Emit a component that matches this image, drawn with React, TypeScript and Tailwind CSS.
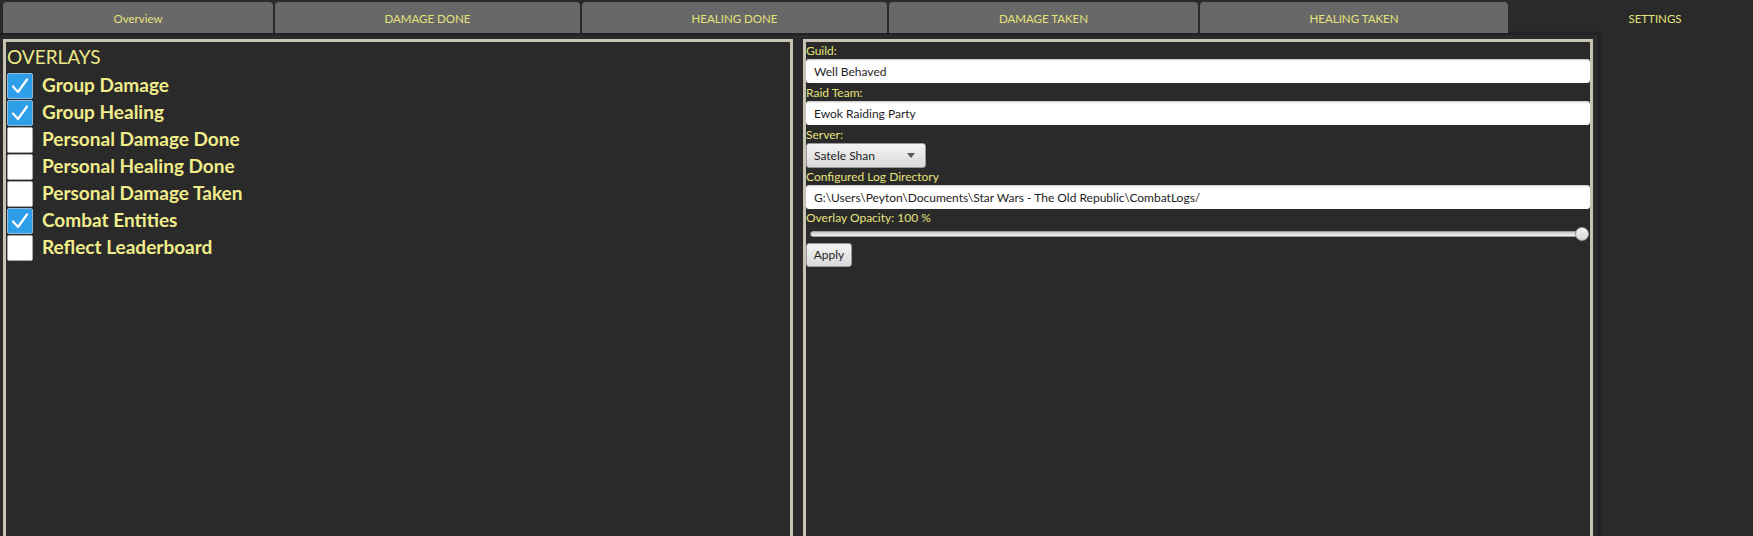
import { useState } from 'react';

type Overlay = { label: string; checked: boolean };

const tabs = [
  { label: 'Overview', w: 'w-[270px]' },
  { label: 'DAMAGE DONE', w: 'w-[305px]' },
  { label: 'HEALING DONE', w: 'w-[305px]' },
  { label: 'DAMAGE TAKEN', w: 'w-[309px]' },
  { label: 'HEALING TAKEN', w: 'w-[308px]' },
];

const initialOverlays: Overlay[] = [
  { label: 'Group Damage', checked: true },
  { label: 'Group Healing', checked: true },
  { label: 'Personal Damage Done', checked: false },
  { label: 'Personal Healing Done', checked: false },
  { label: 'Personal Damage Taken', checked: false },
  { label: 'Combat Entities', checked: true },
  { label: 'Reflect Leaderboard', checked: false },
];

function CheckBox({ checked }: { checked: boolean }) {
  return (
    <div
      className={
        checked
          ? 'flex h-[26px] w-[26px] shrink-0 items-center justify-center rounded-[2px] border border-[#8fb8d8] bg-[#2f9fea]'
          : 'h-[26px] w-[26px] shrink-0 rounded-[2px] border border-[#a8a8a8] bg-white'
      }
    >
      {checked && (
        <svg width="22" height="22" viewBox="0 0 22 22">
          <polyline
            points="4,11.5 9,17 18,4.5"
            fill="none"
            stroke="white"
            strokeWidth="2.2"
            strokeLinecap="round"
            strokeLinejoin="round"
          />
        </svg>
      )}
    </div>
  );
}

function Label({ children }: { children: string }) {
  return <div className="h-[17px] text-[12px] leading-[17px] text-[#e6e27c]">{children}</div>;
}

function Field({ value }: { value: string }) {
  return (
    <div className="flex h-[24px] items-center rounded-[3px] border-t border-[#d0d0d0] bg-white pl-[8px] text-[12px] text-[#1e1e1e] shadow-[inset_0_1px_1px_rgba(0,0,0,0.08)]">
      {value}
    </div>
  );
}

export default function App() {
  const [overlays] = useState(initialOverlays);

  return (
    <div className="h-[536px] w-full overflow-hidden bg-[#2a2a2a] font-['Lato','Liberation_Sans',sans-serif]">
      {/* tab header */}
      <div className="flex h-[33px] gap-[2px] overflow-hidden pl-[3px] pt-[2px]">
        {tabs.map((t) => (
          <div
            key={t.label}
            className={`${t.w} flex shrink-0 items-center justify-center rounded-t-[4px] bg-[#686868] pt-[3px] text-[11.5px] text-[#e6e27a]`}
          >
            {t.label}
          </div>
        ))}
        <div className="flex w-[290px] shrink-0 items-center justify-center pt-[3px] text-[11.5px] text-[#e6e27a]">
          SETTINGS
        </div>
      </div>

      {/* content */}
      <div className="flex h-[503px] w-[1598px] gap-[10px] border-t-2 border-[#212121] pl-[3px] pt-[4px] shadow-[2px_0_3px_rgba(0,0,0,0.35)]">
        {/* overlays panel */}
        <div className="h-[520px] w-[790px] shrink-0 border-[3px] border-[#c9c3b3]">
          <div className="flex h-[30px] items-center pl-[1px] text-[19px] text-[#ece889]">OVERLAYS</div>
          <div className="flex flex-col pl-[1px]">
            {overlays.map((o) => (
              <div key={o.label} className="flex h-[27px] items-center gap-[9px]">
                <CheckBox checked={o.checked} />
                <span className="text-[19px] font-bold text-[#f1ed8b]">{o.label}</span>
              </div>
            ))}
          </div>
        </div>

        {/* settings panel */}
        <div className="h-[520px] w-[790px] shrink-0 border-[3px] border-[#c9c3b3]">
          <Label>Guild:</Label>
          <Field value="Well Behaved" />
          <div className="h-px" />
          <Label>Raid Team:</Label>
          <Field value="Ewok Raiding Party" />
          <div className="h-px" />
          <Label>Server:</Label>
          <div className="flex h-[25px] w-[120px] items-center justify-between rounded-[3px] border border-[#9a9a9a] bg-gradient-to-b from-[#f4f4f4] to-[#d9d9d9] pl-[7px] pr-[10px] text-[12px] text-[#1e1e1e]">
            <span>Satele Shan</span>
            <svg width="8" height="5" viewBox="0 0 8 5">
              <polygon points="0,0 8,0 4,5" fill="#555" />
            </svg>
          </div>
          <Label>Configured Log Directory</Label>
          <Field value="G:\Users\Peyton\Documents\Star Wars - The Old Republic\CombatLogs/" />
          <Label>Overlay Opacity: 100 %</Label>
          <div className="flex h-[16px] items-center pl-[4px] pr-[1px]">
            <div className="relative h-[6px] flex-1 rounded-full border border-[#9c9c9c] bg-gradient-to-b from-[#c8c8c8] to-[#f2f2f2]">
              <div className="absolute right-[-1px] top-1/2 h-[14px] w-[14px] -translate-y-1/2 rounded-full border border-[#9a9a9a] bg-gradient-to-b from-[#f6f6f6] to-[#d6d6d6]" />
            </div>
          </div>
          <div className="h-[1px]" />
          <div className="flex h-[24px] w-[46px] items-center justify-center rounded-[3px] border border-[#9a9a9a] bg-gradient-to-b from-[#f4f4f4] to-[#d9d9d9] text-[12px] text-[#1e1e1e]">
            Apply
          </div>
        </div>
      </div>
    </div>
  );
}
